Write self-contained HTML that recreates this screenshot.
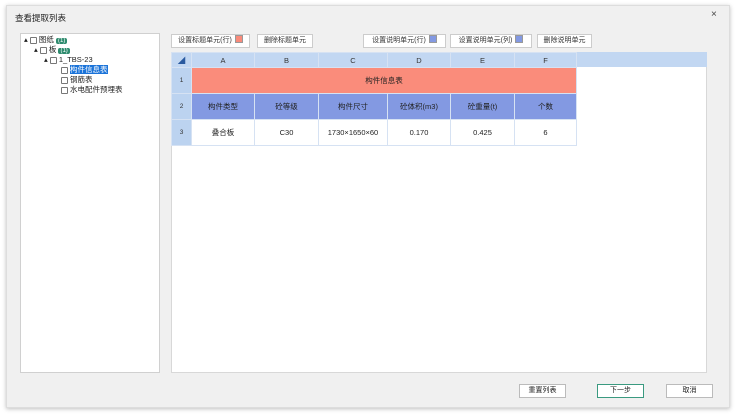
<!DOCTYPE html><html><head><meta charset="utf-8"><style>
*{margin:0;padding:0;box-sizing:border-box}
body{width:745px;height:414px;background:#fff;font-family:"Liberation Sans","Noto Sans CJK SC",sans-serif;font-size:8px;color:#222;position:relative;overflow:hidden}
.dlg{position:absolute;left:6px;top:5px;width:724px;height:403px;background:#f0f0f0;border:1px solid #ddd;box-shadow:0 1px 4px rgba(0,0,0,.25)}
.abs{position:absolute}
.title{left:15px;top:12px;font-size:8.5px;color:#222}
.close{left:711px;top:9px;font-size:10px;color:#444}
.left{left:20px;top:33px;width:140px;height:340px;background:#fff;border:1px solid #d0d0d0}
.right{left:171px;top:52px;width:536px;height:321px;background:#fff;border:1px solid #d8d8d8}
.cb{display:inline-block;width:7px;height:7px;border:1px solid #777;background:#fff;border-radius:1px;vertical-align:middle;margin-right:2px}
.tn{position:absolute;font-size:7.5px;white-space:nowrap;line-height:9px}
.badge{background:#2e8b6e;color:#fff;padding:0 2px;border-radius:2px;font-size:6px}
.btn{position:absolute;top:34px;height:14px;background:#fff;border:1px solid #ccc;font-size:7px;line-height:12px;text-align:center;color:#333;white-space:nowrap}
.sw{display:inline-block;width:8px;height:8px;vertical-align:-1px;margin-left:3px;border:1px solid #999}
table{position:absolute;left:171px;top:52px;border-collapse:collapse}
td{border:1px solid #d6e2f3;text-align:center;font-size:7.5px;padding:0}
.ch td{background:#c2d7f2;color:#333;height:15px}
.rh{background:#bcd3f0;width:20px;color:#333;font-size:6.5px}
.bb{position:absolute;top:384px;width:47px;height:14px;background:#fff;border:1px solid #bbb;font-size:7px;text-align:center;line-height:12px}
</style></head><body>
<div class="dlg"></div>
<div class="abs title">查看提取列表</div>
<div class="abs close">×</div>
<div class="abs left"></div>
<div class="tn" style="left:24px;top:35px">▴ <span class="cb"></span>图纸 <span class="badge">(1)</span></div>
<div class="tn" style="left:34px;top:45px">▴ <span class="cb"></span>板 <span class="badge">(1)</span></div>
<div class="tn" style="left:44px;top:55px">▴ <span class="cb"></span>1_TBS-23</div>
<div class="tn" style="left:61px;top:65px"><span class="cb"></span><span style="background:#1a73d9;color:#fff">构件信息表</span></div>
<div class="tn" style="left:61px;top:75px"><span class="cb"></span>钢筋表</div>
<div class="tn" style="left:61px;top:85px"><span class="cb"></span>水电配件预埋表</div>
<div class="btn" style="left:171px;width:79px">设置标题单元(行)<span class="sw" style="background:#f98a7a"></span></div>
<div class="btn" style="left:257px;width:56px">删除标题单元</div>
<div class="btn" style="left:363px;width:83px">设置说明单元(行)<span class="sw" style="background:#8399e2"></span></div>
<div class="btn" style="left:450px;width:82px">设置说明单元(列)<span class="sw" style="background:#8399e2"></span></div>
<div class="btn" style="left:537px;width:55px">删除说明单元</div>
<div class="abs right"></div>
<div class="abs" style="left:171px;top:52px;width:536px;height:15px;background:#c2d7f2"></div>
<table>
<tr class="ch"><td style="width:20px;color:#2a5aa0">◢</td><td style="width:63px">A</td><td style="width:64px">B</td><td style="width:69px">C</td><td style="width:63px">D</td><td style="width:64px">E</td><td style="width:62px">F</td></tr>
<tr style="height:26px"><td class="rh">1</td><td colspan="6" style="background:#fa8c7b">构件信息表</td></tr>
<tr style="height:26px"><td class="rh">2</td><td style="background:#8399e2">构件类型</td><td style="background:#8399e2">砼等级</td><td style="background:#8399e2">构件尺寸</td><td style="background:#8399e2">砼体积(m3)</td><td style="background:#8399e2">砼重量(t)</td><td style="background:#8399e2">个数</td></tr>
<tr style="height:26px"><td class="rh">3</td><td>叠合板</td><td>C30</td><td>1730×1650×60</td><td>0.170</td><td>0.425</td><td>6</td></tr>
</table>
<div class="bb" style="left:519px">重置列表</div>
<div class="bb" style="left:597px;border:1px solid #3a9a80">下一步</div>
<div class="bb" style="left:666px">取消</div>
</body></html>
